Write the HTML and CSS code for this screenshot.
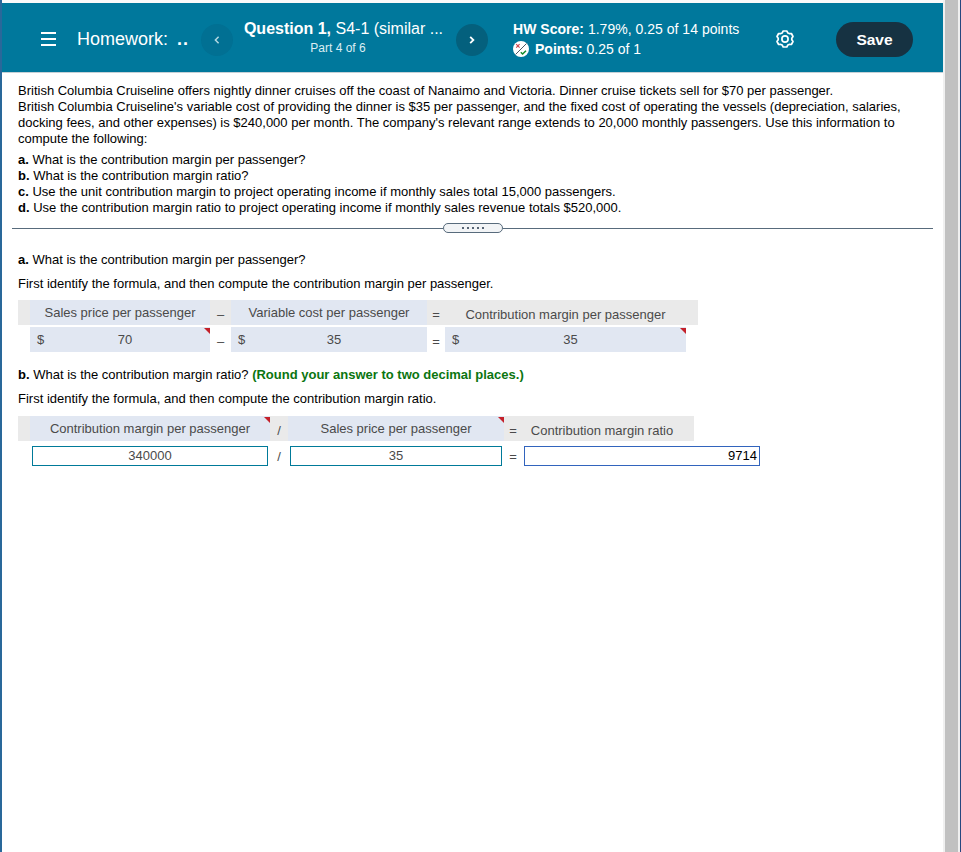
FILE: index.html
```html
<!DOCTYPE html>
<html lang="en">
<head>
    <meta charset="UTF-8">
    <meta name="viewport" content="width=device-width, initial-scale=1.0">
    <title>Homework</title>
    <link rel="stylesheet" href="styles.css">
</head>
<body>
    <div class="player">
        <header class="header">
            <button class="icon-btn menu" aria-label="Menu">
                <svg width="16" height="14" viewBox="0 0 16 14"><path d="M1 1H16M1 7H16M1 13H16" stroke="#fff" stroke-width="1.8"/></svg>
            </button>
            <div class="title">Homework: <span class="dots">..</span></div>
            <button class="nav-btn prev" aria-label="Previous">
                <svg width="6" height="8" viewBox="0 0 6 8"><path d="M4.6 0.8L1.4 4L4.6 7.2" fill="none" stroke="#b5d8e2" stroke-width="1.5"/></svg>
            </button>
            <div class="question">
                <div class="question-name"><b>Question 1,</b> S4-1 (similar ...</div>
                <div class="question-part">Part 4 of 6</div>
            </div>
            <button class="nav-btn next" aria-label="Next">
                <svg width="6" height="8" viewBox="0 0 6 8"><path d="M1.2 0.8L4.4 4L1.2 7.2" fill="none" stroke="#fff" stroke-width="1.8"/></svg>
            </button>
            <div class="scores">
                <div class="score"><b>HW Score:</b> 1.79%, 0.25 of 14 points</div>
                <div class="points">
                    <svg width="16" height="16" viewBox="0 0 16 16">
                        <circle cx="8" cy="8" r="8" fill="#fff"/>
                        <path d="M2.5 13.5L13.5 2.5" stroke="#4c5864" stroke-width="1"/>
                        <path d="M3.2 3.2L6.6 6.6M6.6 3.2L3.2 6.6" stroke="#d0424a" stroke-width="1.1"/>
                        <path d="M7.8 11.3L9.6 13L13 9.8" fill="none" stroke="#128a28" stroke-width="1.5"/>
                    </svg>
                    <span><b>Points:</b> 0.25 of 1</span>
                </div>
            </div>
            <button class="icon-btn settings" aria-label="Settings">
                <svg width="18" height="18" viewBox="0 0 18 18" fill="none" stroke="#fff" stroke-width="1.7" stroke-linejoin="round">
                    <path d="M7.2 1H10.8L11.8 2.9L13.2 3.6L15.4 3.5L17 6.5L15.8 8.2V9.8L17 11.5L15.4 14.5L13.2 14.4L11.800 15.1L10.8 17H7.2L6.2 15.1L4.8 14.4L2.6 14.5L1 11.5L2.2 9.8V8.2L1 6.5L2.6 3.5L4.8 3.6L6.2 2.9Z"/>
                    <circle cx="9" cy="9" r="3.1"/>
                </svg>
            </button>
            <button class="save">Save</button>
        </header>

        <section class="problem">
            <p>
                British Columbia Cruiseline offers nightly dinner cruises off the coast of Nanaimo and Victoria. Dinner cruise tickets sell for $70 per passenger.<br>
                British Columbia Cruiseline's variable cost of providing the dinner is $35 per passenger, and the fixed cost of operating the vessels (depreciation, salaries,<br>
                docking fees, and other expenses) is $240,000 per month. The company's relevant range extends to 20,000 monthly passengers. Use this information to<br>
                compute the following:
            </p>
            <ul>
                <li><b>a.</b> What is the contribution margin per passenger?</li>
                <li><b>b.</b> What is the contribution margin ratio?</li>
                <li><b>c.</b> Use the unit contribution margin to project operating income if monthly sales total 15,000 passengers.</li>
                <li><b>d.</b> Use the contribution margin ratio to project operating income if monthly sales revenue totals $520,000.</li>
            </ul>
        </section>

        <div class="divider">
            <div class="handle"><i></i><i></i><i></i><i></i><i></i></div>
        </div>

        <section class="answer">
            <p><b>a.</b> What is the contribution margin per passenger?</p>
            <p>First identify the formula, and then compute the contribution margin per passenger.</p>

            <div class="formula formula-a">
                <div class="row head">
                    <div class="cell">Sales price per passenger</div>
                    <div class="op">–</div>
                    <div class="cell">Variable cost per passenger</div>
                    <div class="op eq">=</div>
                    <div class="cell label">Contribution margin per passenger</div>
                </div>
                <div class="row">
                    <div class="cell marked"><span class="dollar">$</span>70</div>
                    <div class="op">–</div>
                    <div class="cell"><span class="dollar">$</span>35</div>
                    <div class="op eq">=</div>
                    <div class="cell marked"><span class="dollar">$</span>35</div>
                </div>
            </div>

            <p><b>b.</b> What is the contribution margin ratio? <b class="hint">(Round your answer to two decimal places.)</b></p>
            <p>First identify the formula, and then compute the contribution margin ratio.</p>

            <div class="formula formula-b">
                <div class="row head">
                    <div class="cell marked">Contribution margin per passenger</div>
                    <div class="op">/</div>
                    <div class="cell marked">Sales price per passenger</div>
                    <div class="op eq">=</div>
                    <div class="cell label">Contribution margin ratio</div>
                </div>
                <div class="row fields">
                    <div class="field">340000</div>
                    <div class="op">/</div>
                    <div class="field">35</div>
                    <div class="op eq">=</div>
                    <div class="field active">9714</div>
                </div>
            </div>
        </section>
    </div>
    <div class="scrollbar"></div>
</body>
</html>
```
FILE: styles.css
```css
* {
    box-sizing: border-box;
}
body {
    margin: 0;
    height: 852px;
    display: flex;
    overflow: hidden;
    background: #fff;
    border-left: 2px solid #29689a;
    border-right: 1px solid #27477f;
    font-family: Arial, "Liberation Sans", sans-serif;
    font-size: 13px;
    line-height: 16px;
    color: #000;
}
p, ul {
    margin: 0;
    padding: 0;
}
ul {
    list-style: none;
}
button {
    padding: 0;
    border: 0;
    background: none;
    font-family: inherit;
}
svg {
    display: block;
}
.player {
    width: 941px;
    border-top: 3px solid #fafafa;
}
.scrollbar {
    width: 17px;
    background: #c1c1c1;
    border-left: 2px solid #f0f0f0;
    border-right: 2px solid #f0f0f0;
}

/* header */
.header {
    display: flex;
    align-items: center;
    height: 70px;
    padding: 0 30px 0 38px;
    background: #00789c;
    border-bottom: 1px solid #c5d0d6;
    color: #fff;
    white-space: nowrap;
}
.menu {
    margin: 3px 21px 0 0;
}
.title {
    width: 124px;
    font-size: 18px;
    line-height: 24px;
    margin-top: 2px;
}
.dots {
    margin-left: 4px;
    font-weight: bold;
    letter-spacing: 1px;
}
.nav-btn {
    display: flex;
    align-items: center;
    justify-content: center;
    width: 32px;
    height: 32px;
    margin-top: 4px;
    border-radius: 50%;
    background: #04607d;
}
.prev {
    background: #017093;
}
.question {
    width: 223px;
    padding-right: 2px;
    text-align: center;
    margin-top: 1px;
}
.question-name {
    font-size: 16px;
    line-height: 20px;
}
.question-part {
    font-size: 12px;
    line-height: 18px;
    padding-right: 11px;
    color: #dceef3;
}
.scores {
    width: 263px;
    margin-left: 25px;
    font-size: 14px;
    line-height: 20px;
    margin-top: 2px;
    letter-spacing: 0.02px;
}
.points {
    display: flex;
    align-items: center;
    gap: 6px;
}
.settings {
    margin-top: 3px;
}
.save {
    width: 77px;
    height: 35px;
    margin: 4px 0 0 auto;
    border-radius: 18px;
    background: #163242;
    color: #fff;
    font-size: 15.5px;
    font-weight: bold;
}

/* problem text */
.problem {
    height: 155px;
    padding: 10px 16px 0;
    white-space: nowrap;
}
.problem ul {
    margin-top: 5px;
}
.divider {
    display: flex;
    align-items: center;
    margin: -5px 10px 0;
}
.divider::before,
.divider::after {
    content: "";
    height: 1px;
    flex: 1;
    background: #586b7c;
}
.divider::before {
    flex: 0 0 431px;
}
.handle {
    display: flex;
    align-items: center;
    justify-content: center;
    gap: 3px;
    width: 60px;
    height: 10px;
    border: 1px solid #586b7c;
    border-radius: 5px;
    background: #f2f4f6;
}
.handle i {
    width: 2px;
    height: 2px;
    background: #586575;
}

/* answers */
.answer {
    padding: 15px 16px 0;
}
.answer p {
    line-height: 24px;
}
.hint {
    color: #0b7510;
}
.formula {
    color: #4a4a4a;
}
.row {
    display: grid;
    width: max-content;
    padding: 0 12px;
}
.head {
    background: #eaeaea;
}
.formula-a {
    margin: 4px 0 11px;
}
.formula-a .row {
    grid-template-columns: 180px 21px 196px 18px 241px;
    margin-bottom: 2px;
}
.formula-b {
    margin-top: 5px;
}
.formula-b .row {
    grid-template-columns: 240px 18px 216px 18px 160px;
}
.cell {
    position: relative;
    height: 25px;
    line-height: 25px;
    text-align: center;
    background: #e1e7f2;
}
.formula-a .row:last-child .cell {
    padding-left: 10px;
}
.head .label {
    line-height: 29px;
    background: none;
}
.marked::after {
    content: "";
    position: absolute;
    top: 1px;
    right: 0;
    border-top: 6px solid #c4202a;
    border-left: 6px solid transparent;
}
.dollar {
    position: absolute;
    left: 7px;
}
.op {
    height: 25px;
    line-height: 29px;
    text-align: center;
}
.formula-b .fields {
    grid-template-columns: 236px 22px 212px 22px 236px;
    margin-top: 5px;
    padding-left: 14px;
}
.field {
    height: 20px;
    border: 1px solid #007a99;
    line-height: 18px;
    text-align: center;
}
.active {
    padding-right: 2px;
    border-color: #3264bd;
    text-align: right;
    color: #000;
}
.fields .op {
    height: 20px;
    line-height: 22px;
}
```
